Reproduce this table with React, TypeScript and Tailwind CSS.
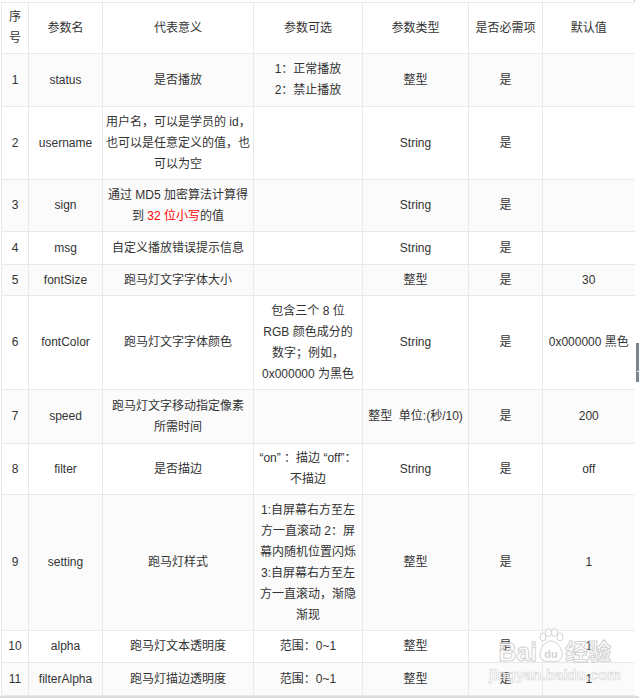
import type { ReactNode } from "react";

// --- Data ---
type Row = {
  h: number;
  no: string;
  name: string;
  desc: ReactNode;
  opts: ReactNode;
  type: string;
  req: string;
  def: string;
};

const ROWS: Row[] = [
  { h: 53, no: "1", name: "status", desc: "是否播放", opts: <>1：正常播放<br />2：禁止播放</>, type: "整型", req: "是", def: "" },
  {
    h: 73,
    no: "2",
    name: "username",
    desc: <>用户名，可以是学员的 id，<br />也可以是任意定义的值，也<br />可以为空</>,
    opts: "",
    type: "String",
    req: "是",
    def: "",
  },
  {
    h: 52,
    no: "3",
    name: "sign",
    desc: (
      <>
        通过 MD5 加密算法计算得
        <br />
        到 <span className="text-[#ff0000]">32 位小写</span>的值
      </>
    ),
    opts: "",
    type: "String",
    req: "是",
    def: "",
  },
  { h: 33, no: "4", name: "msg", desc: "自定义播放错误提示信息", opts: "", type: "String", req: "是", def: "" },
  { h: 31, no: "5", name: "fontSize", desc: "跑马灯文字字体大小", opts: "", type: "整型", req: "是", def: "30" },
  {
    h: 94,
    no: "6",
    name: "fontColor",
    desc: "跑马灯文字字体颜色",
    opts: <>包含三个 8 位<br />RGB 颜色成分的<br />数字；例如，<br />0x000000 为黑色</>,
    type: "String",
    req: "是",
    def: "0x000000 黑色",
  },
  {
    h: 54,
    no: "7",
    name: "speed",
    desc: <>跑马灯文字移动指定像素<br />所需时间</>,
    opts: "",
    type: "整型  单位:(秒/10)",
    req: "是",
    def: "200",
  },
  { h: 51, no: "8", name: "filter", desc: "是否描边", opts: <>“on” ：描边 “off”：<br />不描边</>, type: "String", req: "是", def: "off" },
  {
    h: 136,
    no: "9",
    name: "setting",
    desc: "跑马灯样式",
    opts: (
      <>
        1:自屏幕右方至左
        <br />
        方一直滚动 2：屏
        <br />
        幕内随机位置闪烁
        <br />
        3:自屏幕右方至左
        <br />
        方一直滚动，渐隐
        <br />
        渐现
      </>
    ),
    type: "整型",
    req: "是",
    def: "1",
  },
  { h: 32, no: "10", name: "alpha", desc: "跑马灯文本透明度", opts: "范围：0~1", type: "整型", req: "是", def: "1" },
  { h: 33, no: "11", name: "filterAlpha", desc: "跑马灯描边透明度", opts: "范围：0~1", type: "整型", req: "是", def: "1" },
];

const HEADERS: ReactNode[] = [<>序<br />号</>, "参数名", "代表意义", "参数可选", "参数类型", "是否必需项", "默认值"];
const WIDTHS = ["w-[27px]", "w-[74px]", "w-[151px]", "w-[109px]", "w-[106px]", "w-[74px]", "w-[92px]"];

const cell = "border border-[#e9e9e9] px-[3px] py-0 text-center align-middle whitespace-nowrap";
const lastCell = "border border-r-0 border-[#e9e9e9] px-[3px] py-0 text-center align-middle whitespace-nowrap";

// Baidu 经验 watermark (sits over the table like in the screenshot)
const Watermark = () => (
  <div className="absolute left-[489px] top-[628px] flex flex-col items-center opacity-75 pointer-events-none select-none">
    <div className="flex items-end gap-[1px]">
      <span className="text-[25px] leading-[24px] font-bold text-white [-webkit-text-stroke:1px_#c4c4c4]">Bai</span>
      <svg width="26" height="36" viewBox="0 0 26 36">
        <g fill="#fff" stroke="#c4c4c4" strokeWidth="1">
          <ellipse cx="5" cy="9" rx="3" ry="4" />
          <ellipse cx="10.5" cy="4.5" rx="3" ry="4" />
          <ellipse cx="16.5" cy="4.5" rx="3" ry="4" />
          <ellipse cx="22" cy="9" rx="3" ry="4" />
          <path d="M13 13 C 6 13, 1 22, 2 28 C 3 34, 10 34, 13 33 C 16 34, 23 34, 24 28 C 25 22, 20 13, 13 13 Z" />
        </g>
        <text x="13" y="30" textAnchor="middle" fontSize="11" fontWeight="bold" fill="#c4c4c4" fontFamily="Liberation Sans, sans-serif">
          du
        </text>
      </svg>
      <span className="text-[23px] leading-[24px] font-bold text-white [-webkit-text-stroke:1px_#c4c4c4]">经验</span>
    </div>
    <span className="mt-[3px] text-[15px] leading-[15px] font-bold text-white [-webkit-text-stroke:0.6px_#c8c8c8]">
      jingyan.baidu.com
    </span>
  </div>
);

export default function App() {
  return (
    <div className="relative h-[698px] w-[639px] overflow-hidden bg-white text-[12px] leading-[21px] text-[#333] [font-family:'Liberation_Sans','Noto_Sans_CJK_SC',sans-serif]">
      <div className="w-[635px] h-[696px] pt-[2px] border-r border-dashed border-[#c6c6c6]">
        <table className="ml-[1px] table-fixed border-collapse w-[633px]">
          <colgroup>
            {WIDTHS.map((w, i) => (
              <col key={i} className={w} />
            ))}
          </colgroup>
          <thead>
            <tr className="h-[51px] bg-white">
              {HEADERS.map((hd, i) => (
                <th key={i} className={`${i === 6 ? lastCell : cell} font-normal`}>
                  {hd}
                </th>
              ))}
            </tr>
          </thead>
          <tbody>
            {ROWS.map((r, idx) => (
              <tr key={r.no} style={{ height: r.h }} className={idx % 2 === 0 ? "bg-[#fbfbfb]" : "bg-white"}>
                <td className={cell}>{r.no}</td>
                <td className={cell}>{r.name}</td>
                <td className={cell}>{r.desc}</td>
                <td className={cell}>{r.opts}</td>
                <td className={`${cell} whitespace-pre`}>{r.type}</td>
                <td className={cell}>{r.req}</td>
                <td className={lastCell}>{r.def}</td>
              </tr>
            ))}
          </tbody>
        </table>
      </div>
      <div className="h-[2px] w-full bg-[#dcdcdc]" />

      {/* scrollbar thumb on the right edge */}
      <div className="absolute left-[636px] top-[343px] h-[39px] w-[3px] bg-[#7b8690]">
        <div className="mt-[28px] ml-[1px] h-[1px] w-[2px] bg-white" />
      </div>

      <Watermark />
    </div>
  );
}
